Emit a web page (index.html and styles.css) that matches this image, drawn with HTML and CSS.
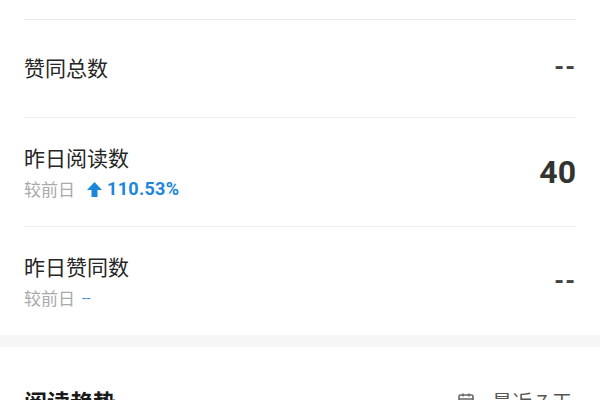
FILE: index.html
```html
<!DOCTYPE html>
<html lang="zh">
<head>
<meta charset="utf-8">
<link rel="stylesheet" href="styles.css">
</head>
<body>
<section class="card stats">
  <div class="top-spacer"></div>
  <div class="row row-single">
    <div class="label">
      <div class="title">赞同总数</div>
    </div>
    <div class="value dash">--</div>
  </div>
  <div class="row">
    <div class="label">
      <div class="title">昨日阅读数</div>
      <div class="sub"><span>较前日</span><svg class="arrow" viewBox="0 0 15 15" width="15" height="15"><path d="M7.5 0 L15 8 L10.5 8 L10.5 15 L4.5 15 L4.5 8 L0 8 Z" fill="#1b87db"/></svg><span class="pct">110.53%</span></div>
    </div>
    <div class="value num">40</div>
  </div>
  <div class="row last">
    <div class="label">
      <div class="title">昨日赞同数</div>
      <div class="sub"><span>较前日</span><span class="pct-dash">--</span></div>
    </div>
    <div class="value dash">--</div>
  </div>
</section>
<div class="band"></div>
<section class="card trend">
  <div class="trend-head">
    <div class="trend-title">阅读趋势</div>
    <div class="range">
      <svg class="cal" viewBox="0 0 16 16" width="16" height="16"><rect x="1" y="2" width="14" height="13" rx="1.5" fill="none" stroke="#666" stroke-width="1.6"/><path d="M1 6 H15 M5 0.5 V3.5 M11 0.5 V3.5" stroke="#666" stroke-width="1.6"/></svg>
      <span>最近 7 天</span>
    </div>
  </div>
</section>
</body>
</html>
```
FILE: styles.css
```css
html, body {
  margin: 0;
  padding: 0;
  background: #ffffff;
}
body {
  font-family: Roboto, "Noto Sans CJK SC", sans-serif;
  color: #222;
  width: 600px;
  overflow: hidden;
}
.card {
  padding: 0 24px;
  background: #fff;
}
.top-spacer {
  height: 19px;
  border-bottom: 1px solid #ececec;
}
.row {
  display: flex;
  align-items: center;
  justify-content: space-between;
  height: 108px;
  border-bottom: 1px solid #ececec;
}
.row-single {
  height: 94px;
  padding-bottom: 3px;
}
.row.last {
  border-bottom: none;
}
.label {
  display: flex;
  flex-direction: column;
  gap: 8px;
}
.title {
  font-family: "Noto Sans CJK SC", sans-serif;
  font-size: 21px;
  line-height: 26px;
  color: #262626;
}
.sub {
  display: flex;
  align-items: center;
  font-family: "Noto Sans CJK SC", sans-serif;
  font-size: 17px;
  line-height: 22px;
  color: #aaaaaa;
}
.arrow {
  margin: 0 5px 0 12px;
}
.pct {
  font-family: Roboto, sans-serif;
  font-weight: 700;
  font-size: 18px;
  letter-spacing: 0.3px;
  color: #1b87db;
}
.pct-dash {
  margin-left: 7px;
  font-family: Roboto, sans-serif;
  color: #3a8fd6;
  font-size: 15px;
}
.value {
  font-family: Roboto, sans-serif;
  font-weight: 700;
  color: #333;
}
.num {
  font-size: 32px;
}
.dash {
  font-size: 25px;
  letter-spacing: 1px;
  color: #444;
}
.band {
  height: 12px;
  background: #f6f6f6;
}
.trend-head {
  display: flex;
  justify-content: space-between;
  align-items: center;
  padding-top: 39px;
}
.trend-title {
  font-family: "Noto Sans CJK SC", sans-serif;
  font-weight: 700;
  font-size: 23px;
  line-height: 30px;
  color: #1a1a1a;
}
.range {
  display: flex;
  align-items: center;
  gap: 18px;
  padding-right: 4px;
  font-family: "Noto Sans CJK SC", sans-serif;
  font-size: 20px;
  color: #555;
}
```
